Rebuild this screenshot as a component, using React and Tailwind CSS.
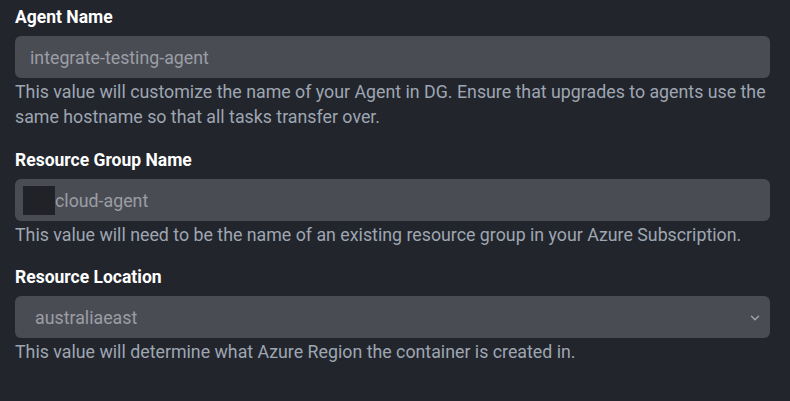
import { ChevronDown } from "lucide-react";

function Field({ label, help, className, children }) {
  return (
    <div className={"flex flex-col " + (className || "")}>
      <label className="text-[17.5px] leading-6 font-bold text-white mb-[7px]">{label}</label>
      {children}
      <p className="text-[17.8px] leading-[25px] pt-px text-[#9ea6b2]">{help}</p>
    </div>
  );
}

export default function App() {
  return (
    <div
      className="w-[790px] h-[401px] bg-[#22252c] px-[15px] pt-[5px] flex flex-col overflow-hidden"
      style={{ fontFamily: "Roboto, 'Liberation Sans', sans-serif" }}
    >
      <Field
        className="mb-[19px]"
        label="Agent Name"
        help="This value will customize the name of your Agent in DG. Ensure that upgrades to agents use the same hostname so that all tasks transfer over."
      >
        <div className="h-[42px] w-[755px] rounded-md bg-[#4a4c54] flex items-center pl-[15px] pt-[3px] text-[17.8px] text-[#9b9ea5]">
          integrate-testing-agent
        </div>
      </Field>

      <Field
        className="mb-[18px]"
        label="Resource Group Name"
        help="This value will need to be the name of an existing resource group in your Azure Subscription."
      >
        <div className="h-[42px] w-[755px] rounded-md bg-[#4a4c54] flex items-center pl-2 text-[17.8px] text-[#9b9ea5]">
          <span className="w-8 h-[29px] bg-[#202227] mt-[1px]"></span>
          <span className="pt-[3px]">cloud-agent</span>
        </div>
      </Field>

      <Field
        label="Resource Location"
        help="This value will determine what Azure Region the container is created in."
      >
        <div className="h-[42px] w-[755px] rounded-md bg-[#4a4c54] flex items-center justify-between pl-5 pr-2 text-[17.8px] text-[#9b9ea5]">
          <span className="pt-[3px]">australiaeast</span>
          <ChevronDown className="w-[14px] h-[14px] text-[#a0a4ab] mt-[2px]" strokeWidth={2.5} />
        </div>
      </Field>
    </div>
  );
}
